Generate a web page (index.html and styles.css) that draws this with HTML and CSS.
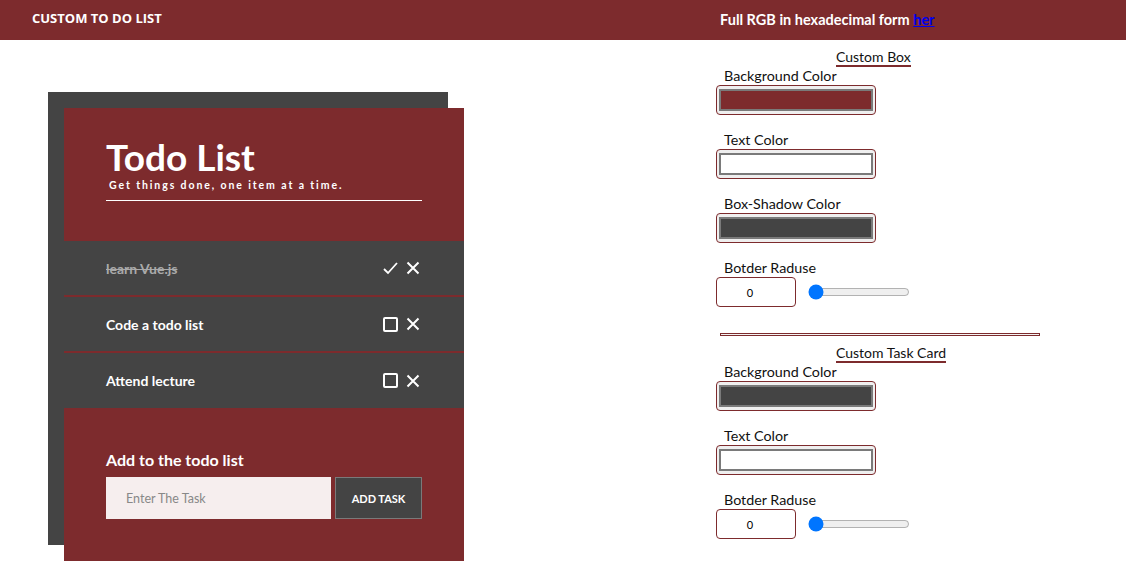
FILE: index.html
```html
<!DOCTYPE html>
<html>
<head>
<meta charset="utf-8">
<title>Custom To Do List</title>
<link rel="stylesheet" href="styles.css">
</head>
<body>
<header class="topbar">
  <div class="brand">CUSTOM TO DO LIST</div>
  <div class="hint">Full RGB in hexadecimal form <a href="#">her</a></div>
</header>
<main class="layout">
  <section class="left">
    <div class="card">
      <div class="card-head">
        <h1 class="title">Todo List</h1>
        <p class="subtitle">Get things done, one item at a time.</p>
      </div>
      <ul class="tasks">
        <li class="task done">
          <span class="task-text">learn Vue.js</span>
          <span class="task-icons">
            <svg class="ico" width="15" height="15" viewBox="0 0 15 15"><polyline points="1,8 5,12 14,2" fill="none" stroke="#fff" stroke-width="1.8"/></svg>
            <svg class="ico" width="14" height="14" viewBox="0 0 14 14"><path d="M1.5 1.5 L12.5 12.5 M12.5 1.5 L1.5 12.5" stroke="#fff" stroke-width="2"/></svg>
          </span>
        </li>
        <li class="task">
          <span class="task-text">Code a todo list</span>
          <span class="task-icons">
            <svg class="ico" width="15" height="15" viewBox="0 0 15 15"><rect x="1" y="1" width="13" height="13" rx="1" fill="none" stroke="#fff" stroke-width="2"/></svg>
            <svg class="ico" width="14" height="14" viewBox="0 0 14 14"><path d="M1.5 1.5 L12.5 12.5 M12.5 1.5 L1.5 12.5" stroke="#fff" stroke-width="2"/></svg>
          </span>
        </li>
        <li class="task">
          <span class="task-text">Attend lecture</span>
          <span class="task-icons">
            <svg class="ico" width="15" height="15" viewBox="0 0 15 15"><rect x="1" y="1" width="13" height="13" rx="1" fill="none" stroke="#fff" stroke-width="2"/></svg>
            <svg class="ico" width="14" height="14" viewBox="0 0 14 14"><path d="M1.5 1.5 L12.5 12.5 M12.5 1.5 L1.5 12.5" stroke="#fff" stroke-width="2"/></svg>
          </span>
        </li>
      </ul>
      <div class="add">
        <h2 class="add-title">Add to the todo list</h2>
        <div class="add-row">
          <input class="add-input" type="text" placeholder="Enter The Task">
          <button class="add-btn">ADD TASK</button>
        </div>
      </div>
    </div>
  </section>
  <section class="right">
    <h3 class="group-title">Custom Box</h3>
    <div class="field">
      <label class="label">Background Color</label>
      <input class="color" type="color" value="#7d2b2d">
    </div>
    <div class="field">
      <label class="label">Text Color</label>
      <input class="color" type="color" value="#ffffff">
    </div>
    <div class="field">
      <label class="label">Box-Shadow Color</label>
      <input class="color" type="color" value="#444444">
    </div>
    <div class="field">
      <label class="label">Botder Raduse</label>
      <div class="range-row">
        <input class="num" type="text" value="0">
        <input class="slider" type="range" min="0" max="50" value="0">
      </div>
    </div>
    <hr class="sep">
    <h3 class="group-title">Custom Task Card</h3>
    <div class="field">
      <label class="label">Background Color</label>
      <input class="color" type="color" value="#444444">
    </div>
    <div class="field">
      <label class="label">Text Color</label>
      <input class="color" type="color" value="#ffffff">
    </div>
    <div class="field">
      <label class="label">Botder Raduse</label>
      <div class="range-row">
        <input class="num" type="text" value="0">
        <input class="slider" type="range" min="0" max="50" value="0">
      </div>
    </div>
  </section>
</main>
</body>
</html>
```
FILE: styles.css
```css
* { box-sizing: border-box; }
body {
  margin: 0;
  font-family: Lato, "Noto Sans", sans-serif;
  background: #fff;
  color: #111;
  overflow: hidden;
}
.topbar {
  height: 40px;
  background: #7d2b2d;
  color: #fff;
  display: flex;
  align-items: center;
}
.brand {
  width: 720px;
  padding-left: 32px;
  font-family: "Open Sans", sans-serif;
  font-weight: 700;
  font-size: 13px;
  padding-bottom: 5px;
}
.hint {
  font-size: 14.5px;
  font-weight: 700;
  padding-bottom: 2px;
}
.hint a { color: #0000ee; }

.layout {
  display: grid;
  grid-template-columns: 716px 1fr;
}
.left {
  padding: 68px 0 0 64px;
}
.card {
  width: 400px;
  background: #7d2b2d;
  box-shadow: -16px -16px 0 #444;
  color: #fff;
}
.card-head {
  padding: 28px 42px 40px;
}
.title {
  margin: 0;
  font-size: 37px;
  line-height: 42px;
  font-weight: 700;
}
.subtitle {
  margin: 0;
  padding: 0 0 8px 3px;
  font-size: 10.5px;
  line-height: 14px;
  font-weight: 700;
  letter-spacing: 1.9px;
  border-bottom: 1px solid #fff;
}
.tasks {
  list-style: none;
  margin: 0;
  padding: 0;
  background: #444;
}
.task {
  height: 56px;
  border-bottom: 2px solid #7d2b2d;
  padding: 0 42px;
  display: flex;
  align-items: center;
  justify-content: space-between;
  font-size: 14px;
  font-weight: 700;
}
.task:last-child { border-bottom: none; height: 55px; }
.task.done .task-text {
  color: #aaa;
  text-decoration: line-through;
}
.task-icons {
  display: flex;
  align-items: center;
  gap: 8px;
  margin-right: 2px;
}
.ico { display: block; }
.add {
  padding: 42px 42px 42px;
}
.add-title {
  margin: 0 0 7px;
  font-size: 16px;
  line-height: 20px;
  font-weight: 700;
}
.add-row {
  display: flex;
  gap: 4px;
}
.add-input {
  width: 225px;
  height: 42px;
  border: none;
  background: #f6eeee;
  padding: 0 20px;
  font-family: Lato, sans-serif;
  font-size: 12.5px;
  outline: none;
}
.add-input::placeholder { color: #888; }
.add-btn {
  width: 87px;
  height: 42px;
  background: #444;
  border: 1px solid #7a7a7a;
  color: #fff;
  font-family: Lato, sans-serif;
  font-weight: 700;
  font-size: 11px;
}

.right {
  padding-top: 8px;
  display: flex;
  flex-direction: column;
  align-items: flex-start;
}
.group-title {
  margin: 0 0 0 120px;
  font-size: 14px;
  line-height: 17px;
  font-weight: 400;
  border-bottom: 2px solid #7d2b2d;
}
.field {
  margin-bottom: 16px;
  display: flex;
  flex-direction: column;
  align-items: flex-start;
}
.label {
  padding-left: 8px;
  font-size: 14.3px;
  line-height: 18px;
}
.color {
  width: 160px;
  height: 30px;
  border: 1px solid #7d2b2d;
  border-radius: 4px;
  padding: 3px 2px;
  background: #efefef;
  margin: 0;
}
.color::-webkit-color-swatch-wrapper { padding: 0; }
.color::-webkit-color-swatch {
  border: 2px solid #7a7a7a;
  border-radius: 0;
}
.range-row {
  display: flex;
  align-items: center;
}
.num {
  width: 80px;
  height: 30px;
  border: 1px solid #7d2b2d;
  border-radius: 4px;
  text-align: center;
  padding: 0 12px 0 0;
  font-family: Lato, sans-serif;
  font-size: 11px;
  margin: 0;
}
.slider {
  width: 102px;
  margin: 0 0 0 12px;
}
.sep {
  width: 320px;
  height: 3px;
  border: 1px solid #7d2b2d;
  background: #f4f4f4;
  margin: 10px 0 8px 4px;
}
```
